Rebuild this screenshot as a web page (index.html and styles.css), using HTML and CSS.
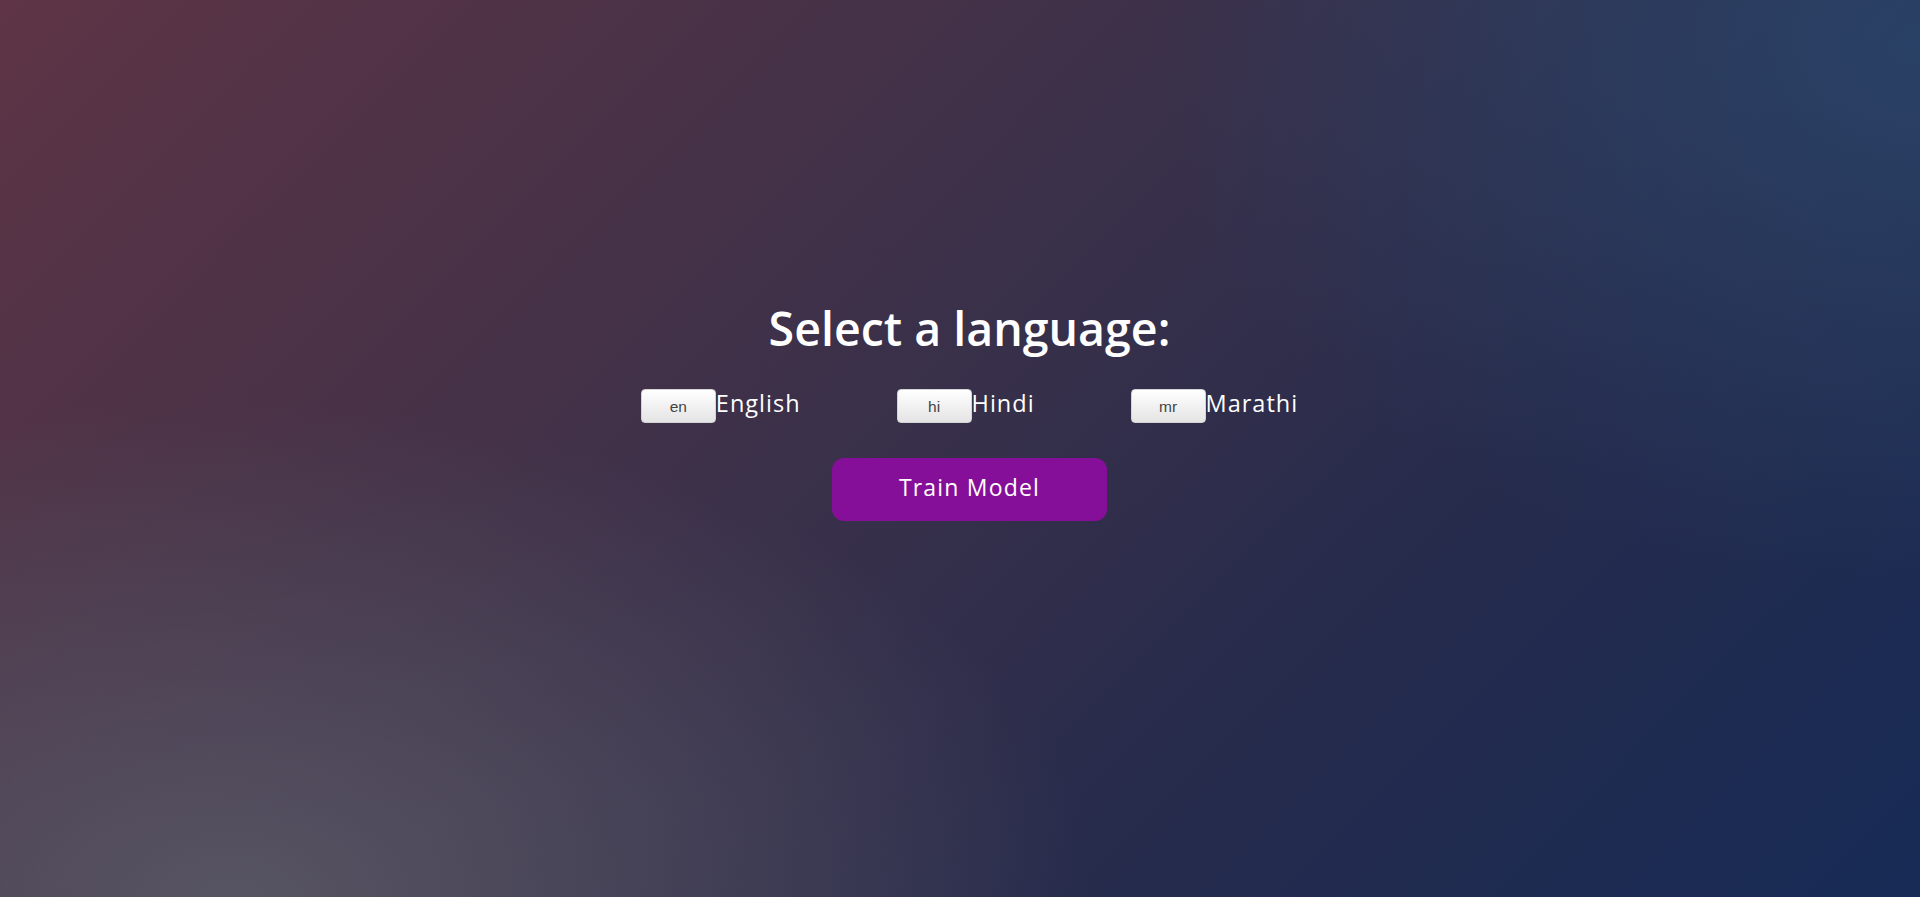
FILE: index.html
```html
<!DOCTYPE html>
<html lang="en">
<head>
<meta charset="utf-8">
<title>Select a language</title>
<link rel="stylesheet" href="styles.css">
</head>
<body>
<main class="wrap">
  <h1 class="title">Select a language:</h1>
  <div class="langs">
    <label class="lang"><button class="code" type="button">en</button><span class="name">English</span></label>
    <label class="lang"><button class="code" type="button">hi</button><span class="name">Hindi</span></label>
    <label class="lang"><button class="code" type="button">mr</button><span class="name">Marathi</span></label>
  </div>
  <button class="train" type="button">Train Model</button>
</main>
</body>
</html>
```

FILE: styles.css
```css
html, body {
  margin: 0;
  height: 100%;
}
body {
  font-family: "Open Sans", "Noto Sans", sans-serif;
  color: #fff;
  background:
    radial-gradient(ellipse 45% 55% at 12% 100%, rgba(88, 86, 100, 0.95) 0%, rgba(88, 86, 100, 0) 100%),
    radial-gradient(ellipse 40% 60% at 100% 5%, rgba(42, 68, 105, 0.9) 0%, rgba(42, 68, 105, 0) 100%),
    linear-gradient(135deg, #5e3446 0%, #4a3247 25%, #38304a 48%, #262b4c 70%, #172b56 100%);
  overflow: hidden;
}
.wrap {
  display: flex;
  flex-direction: column;
  align-items: center;
  padding-top: 296px;
  padding-left: 19px;
}
.title {
  margin: 0;
  font-size: 46.5px;
  font-weight: 600;
  line-height: 64px;
}
.langs {
  display: flex;
  align-items: baseline;
  gap: 96px;
  margin-top: 28px;
}
.lang {
  display: flex;
  align-items: baseline;
}
.code {
  width: 75px;
  height: 34px;
  padding: 0;
  border: 1px solid #d4d4d4;
  border-radius: 4px;
  background: linear-gradient(#ffffff, #e4e4e4);
  font-family: "Liberation Sans", Arial, sans-serif;
  font-size: 15.5px;
  color: #444;
  line-height: 34px;
}
.name {
  font-size: 23.5px;
  letter-spacing: 1px;
  line-height: 30px;
}
.train {
  margin-top: 35px;
  width: 275px;
  height: 63px;
  padding: 0 0 5px;
  border: none;
  border-radius: 12px;
  background: #860f99;
  color: #fff;
  font-family: "Open Sans", "Noto Sans", sans-serif;
  font-size: 23px;
  letter-spacing: 1.2px;
}
```
